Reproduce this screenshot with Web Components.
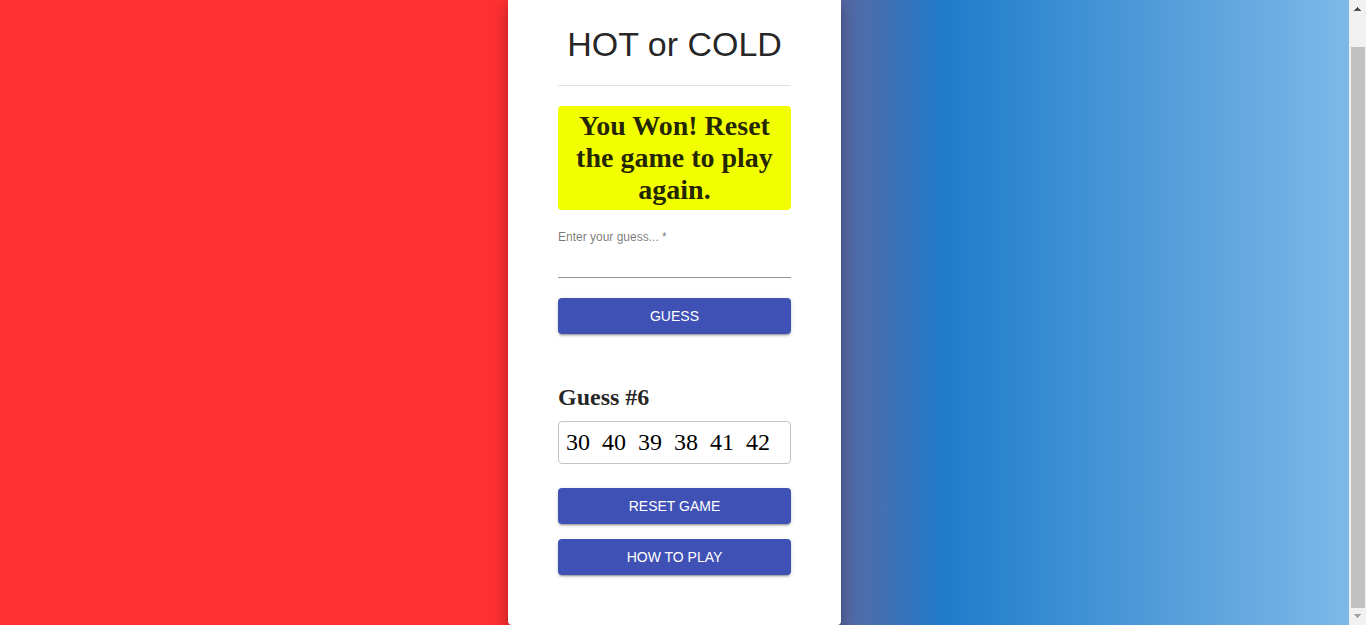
<!DOCTYPE html>
<html lang="en">
<head>
<meta charset="utf-8">
<meta name="viewport" content="width=device-width, initial-scale=1">
<title>Hot or Cold</title>
<style>
  body { margin: 0; color: rgba(0, 0, 0, .87); font-family: "Liberation Sans", Arial, sans-serif; }
</style>
</head>
<body>
<hot-cold-app></hot-cold-app>

<template id="app-template">
  <style>
    :host { display: grid; grid-template-columns: minmax(0, 1fr) auto; min-height: 100vh; }
    main {
      display: flex; justify-content: center; align-items: flex-start; overflow: hidden;
      background: linear-gradient(to right, #ff3032 40%, #207cca 70%, #7db9e8 100%);
    }
  </style>
  <main>
    <game-card>
      <h1 slot="title">HOT or COLD</h1>
      <game-message>You Won! Reset the game to play again.</game-message>
      <guess-form></guess-form>
      <guess-history values="30 40 39 38 41 42"></guess-history>
      <game-actions>
        <game-button>RESET GAME</game-button>
        <game-button>HOW TO PLAY</game-button>
      </game-actions>
    </game-card>
  </main>
  <page-scrollbar></page-scrollbar>
</template>

<template id="card-template">
  <style>
    :host {
      display: block; box-sizing: border-box; width: 100%; max-width: 333px; padding: 23px 50px 50px;
      background: #fff; border-radius: 0 0 4px 4px;
      box-shadow: 0 6px 6px -3px rgba(0,0,0,.2), 0 10px 14px 1px rgba(0,0,0,.14), 0 4px 18px 3px rgba(0,0,0,.12);
    }
    ::slotted(h1) { margin: 0; font-size: 34px; line-height: 42px; font-weight: 400; text-align: center; }
    hr { margin: 20px 0; border: 0; height: 1px; background: rgba(0,0,0,.12); }
  </style>
  <slot name="title"></slot>
  <hr>
  <slot></slot>
</template>

<template id="message-template">
  <style>
    :host { display: block; padding: 4px 8px; border-radius: 4px; background: #f2ff00; }
    h2 { margin: 0; font: bold 28px/32px "Liberation Serif", "Times New Roman", serif; text-align: center; }
  </style>
  <h2><slot></slot></h2>
</template>

<template id="button-template">
  <style>
    :host { display: block; }
    button {
      display: block; width: 100%; margin: 0; padding: 6px 16px; border: 0; border-radius: 4px;
      font: 400 14px/24px "Liberation Sans", Arial, sans-serif; color: #fff; background: #3f51b5; cursor: pointer;
      box-shadow: 0 3px 1px -2px rgba(0,0,0,.2), 0 2px 2px rgba(0,0,0,.14), 0 1px 5px rgba(0,0,0,.12);
    }
    button:hover { background: #303f9f; }
  </style>
  <button type="button"><slot></slot></button>
</template>

<template id="form-template">
  <style>
    :host { display: block; margin: 20px 0 48px; }
    label { display: block; font-size: 12px; line-height: 14px; color: rgba(0,0,0,.54); }
    input {
      display: block; box-sizing: border-box; width: 100%; height: 34px; margin: 0 0 20px; padding: 6px 0;
      border: 0; border-bottom: 1px solid rgba(0,0,0,.42); border-radius: 0; outline: 0; background: none;
      font: 16px/20px "Liberation Sans", Arial, sans-serif; color: inherit;
    }
    input:focus { border-bottom-color: #3f51b5; }
  </style>
  <form>
    <label for="guess">Enter your guess... *</label>
    <input id="guess" name="guess" type="text" inputmode="numeric" autocomplete="off" required>
    <game-button>GUESS</game-button>
  </form>
</template>

<template id="history-template">
  <style>
    :host { display: block; font-family: "Liberation Serif", "Times New Roman", serif; font-size: 24px; }
    h3 { margin: 0 0 9px; font-size: 24px; line-height: 30px; }
    ul {
      display: flex; flex-wrap: wrap; gap: 4px 12px; min-height: 27px; margin: 0; padding: 7px; list-style: none;
      border: 1px solid #c4c4c4; border-radius: 4px; color: #000; line-height: 27px;
    }
  </style>
  <h3></h3>
  <ul></ul>
</template>

<template id="actions-template">
  <style>
    :host { display: grid; gap: 15px; margin-top: 24px; }
  </style>
  <slot></slot>
</template>

<template id="scrollbar-template">
  <style>
    :host {
      display: flex; flex-direction: column; box-sizing: border-box; width: 17px; height: 100vh;
      padding: 0 1px 0 2px; background: #f1f1f1;
    }
    svg { display: block; flex: none; width: 14px; height: 17px; }
    .track { display: flex; flex-direction: column; justify-content: flex-end; flex: 1; }
    .thumb { height: 95%; background: #c1c1c1; }
  </style>
  <svg viewBox="0 0 14 17" aria-hidden="true" shape-rendering="crispEdges"><path d="M6 7h1v1h1v1h1v1h1v1H3v-1h1V9h1V8h1z" fill="#505050"/></svg>
  <div class="track"><div class="thumb"></div></div>
  <svg viewBox="0 0 14 17" aria-hidden="true" shape-rendering="crispEdges"><path d="M3 6h7v1H9v1H8v1H7v1H6V9H5V8H4V7H3z" fill="#a3a3a3"/></svg>
</template>

<script>
  class TemplateElement extends HTMLElement {
    constructor() {
      super();
      const template = document.getElementById(this.constructor.template);
      this.attachShadow({ mode: "open" }).append(template.content.cloneNode(true));
    }
  }

  class GuessHistory extends TemplateElement {
    static template = "history-template";
    static observedAttributes = ["values"];
    attributeChangedCallback() {
      const values = this.getAttribute("values").split(" ");
      this.shadowRoot.querySelector("h3").textContent = `Guess #${values.length}`;
      this.shadowRoot.querySelector("ul").replaceChildren(...values.map(value => {
        const item = document.createElement("li");
        item.textContent = value;
        return item;
      }));
    }
  }

  customElements.define("game-button", class extends TemplateElement { static template = "button-template"; });
  customElements.define("game-card", class extends TemplateElement { static template = "card-template"; });
  customElements.define("game-message", class extends TemplateElement { static template = "message-template"; });
  customElements.define("guess-form", class extends TemplateElement { static template = "form-template"; });
  customElements.define("guess-history", GuessHistory);
  customElements.define("game-actions", class extends TemplateElement { static template = "actions-template"; });
  customElements.define("page-scrollbar", class extends TemplateElement { static template = "scrollbar-template"; });
  customElements.define("hot-cold-app", class extends TemplateElement { static template = "app-template"; });
</script>
</body>
</html>
